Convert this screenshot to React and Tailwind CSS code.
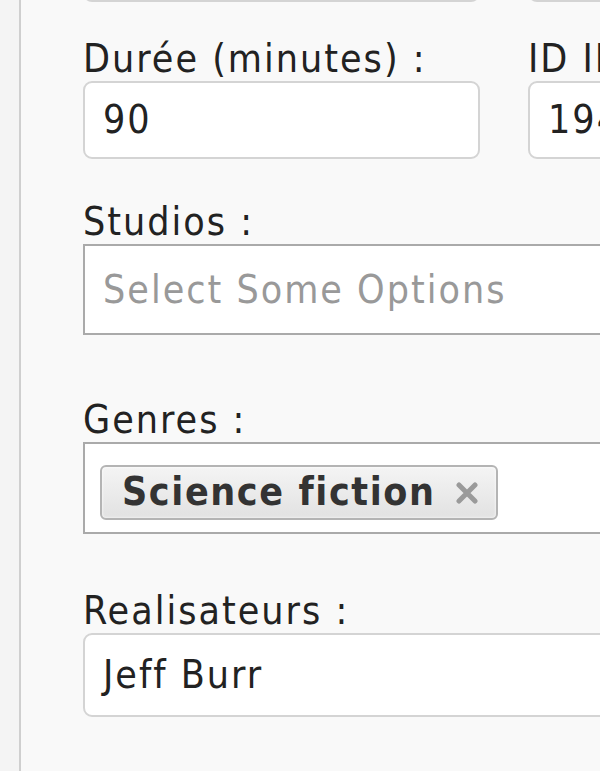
import React from 'react';

const font = { fontFamily: '"DejaVu Sans Condensed", Tahoma, "DejaVu Sans", sans-serif' };

const Label = ({ children }) => (
  <label className="block text-[39px] leading-[44px] tracking-[2px] text-[#222]">{children}</label>
);

const TextInput = ({ value, className = '' }) => (
  <div className={`bg-white border-2 border-[#d4d4d4] rounded-[9px] flex items-center pl-[18px] text-[39px] tracking-[2px] text-[#222] ${className}`}>
    {value}
  </div>
);

const App = () => {
  return (
    <div className="w-[600px] h-[771px] overflow-hidden bg-[#f4f4f4] flex" style={font}>
      <div className="w-[19px] shrink-0" />
      <div className="flex-1 border-l-2 border-[#cfcfcf] bg-[#f9f9f9] pl-[62px]">
        <div className="w-[700px] -mt-[76px]">
          {/* previous row, cut off */}
          <div className="grid grid-cols-[397px_397px] gap-x-[48px]">
            <TextInput value="" className="h-[78px]" />
            <TextInput value="" className="h-[78px]" />
          </div>

          <div className="grid grid-cols-[397px_397px] gap-x-[48px] mt-[35px]">
            <div>
              <Label>Durée (minutes) :</Label>
              <TextInput value="90" className="h-[78px]" />
            </div>
            <div>
              <Label>ID IMDB :</Label>
              <TextInput value="1945" className="h-[78px]" />
            </div>
          </div>

          <div className="mt-[41px]">
            <Label>Studios :</Label>
            <div className="h-[91px] bg-white border-2 border-[#aaa] flex items-center pl-[18px] pt-[2px] text-[39px] tracking-[2px] text-[#999]">
              Select Some Options
            </div>
          </div>

          <div className="mt-[63px]">
            <Label>Genres :</Label>
            <div className="h-[92px] bg-white border-2 border-[#aaa] flex items-start pt-[21px] pl-[15px]">
              <div className="h-[55px] flex items-center gap-[20px] pl-[20px] pr-[18px] rounded-[6px] border-2 border-[#b4b4b4] bg-gradient-to-b from-[#f4f4f4] to-[#e2e2e2] shadow-[inset_0_0_3px_white]">
                <span className="text-[39px] font-bold tracking-[1.6px] text-[#333]">Science fiction</span>
                <svg width="22" height="22" viewBox="0 0 22 22">
                  <path d="M3 3 L19 19 M19 3 L3 19" stroke="#9a9a9a" strokeWidth="5" strokeLinecap="round" />
                </svg>
              </div>
            </div>
          </div>

          <div className="mt-[55px]">
            <Label>Realisateurs :</Label>
            <TextInput value="Jeff Burr" className="h-[84px]" />
          </div>
        </div>
      </div>
    </div>
  );
};

export default App;
